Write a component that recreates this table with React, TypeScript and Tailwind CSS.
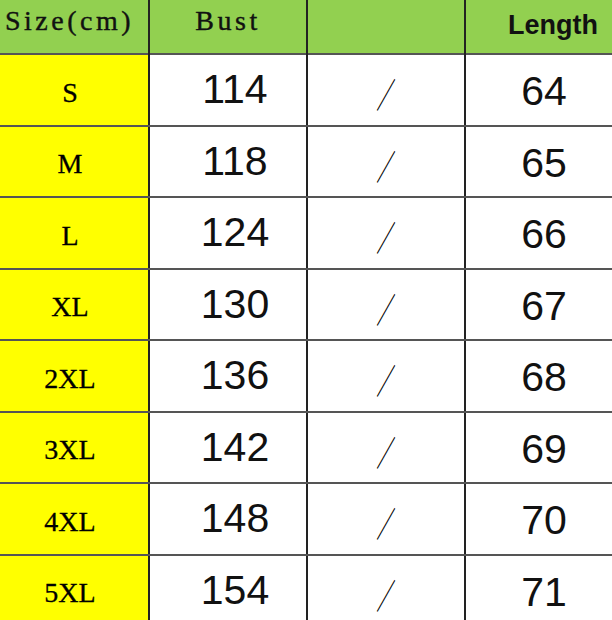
const rows = [
  { size: 'S', bust: '114', length: '64' },
  { size: 'M', bust: '118', length: '65' },
  { size: 'L', bust: '124', length: '66' },
  { size: 'XL', bust: '130', length: '67' },
  { size: '2XL', bust: '136', length: '68' },
  { size: '3XL', bust: '142', length: '69' },
  { size: '4XL', bust: '148', length: '70' },
  { size: '5XL', bust: '154', length: '71' },
];

export default function App() {
  return (
    <div className="w-[612px] h-[620px] overflow-hidden bg-white text-[#111]">
      {/* header */}
      <div className="grid grid-cols-[148px_158px_158px_148px] h-[53px] bg-[#92d050]">
        <div className="flex items-center pl-[5px] pb-[16px] text-[28px] tracking-[3.5px] font-['Liberation_Serif',serif] [-webkit-text-stroke:0.4px_#111]">
          Size(cm)
        </div>
        <div className="flex items-center justify-center pb-[16px] border-l-2 border-[#222] text-[28px] tracking-[3.5px] font-['Liberation_Serif',serif] [-webkit-text-stroke:0.4px_#111]">
          Bust
        </div>
        <div className="border-l-2 border-[#222]" />
        <div className="flex items-center justify-end pr-[14px] pb-[8px] border-l-2 border-[#222] text-[27px] font-bold font-['Liberation_Sans',Arial,sans-serif]">
          Length
        </div>
      </div>

      {/* body */}
      {rows.map((r) => (
        <div
          key={r.size}
          className="grid grid-cols-[148px_158px_158px_148px] h-[71.5px] border-t-2 border-[#555]"
        >
          <div className="flex items-center justify-center pt-[6px] pr-[8px] bg-[#ffff00] text-[28px] text-black font-['Liberation_Serif',serif] [-webkit-text-stroke:0.3px_black]">
            {r.size}
          </div>
          <div className="flex items-center justify-center pl-[14px] border-l-2 border-[#222] text-[41px] font-['Liberation_Sans',Arial,sans-serif]">
            {r.bust}
          </div>
          <div className="flex items-center justify-center pt-[8px] border-l-2 border-[#222]">
            <span className="inline-block text-[30px] text-black font-medium scale-x-[0.65] scale-y-[1.15] font-['Noto_Sans_CJK_SC',sans-serif]">
              ／
            </span>
          </div>
          <div className="flex items-center justify-center pl-[10px] pt-[4px] border-l-2 border-[#222] text-[41px] font-['Liberation_Sans',Arial,sans-serif]">
            {r.length}
          </div>
        </div>
      ))}
    </div>
  );
}
